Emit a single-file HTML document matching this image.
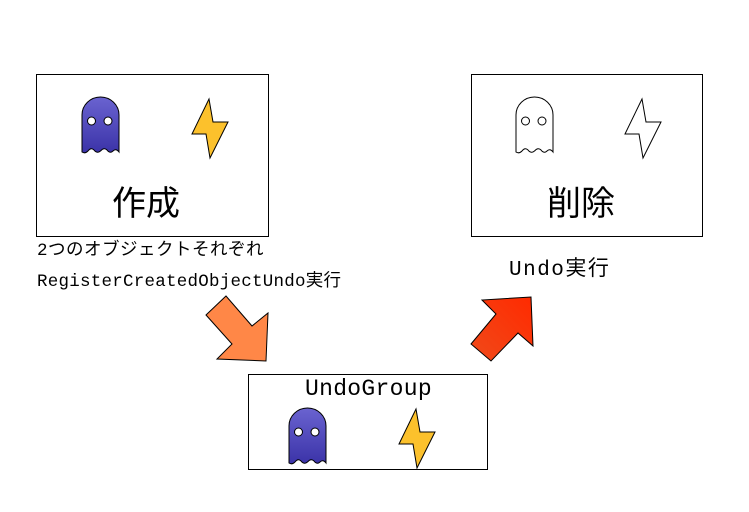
<!DOCTYPE html>
<html><head><meta charset="utf-8"><style>
body{margin:0;width:749px;height:512px;background:#fff;position:relative;overflow:hidden;font-family:"Liberation Mono","Noto Sans CJK JP",monospace}
.t{position:absolute;white-space:nowrap;color:#000}
</style></head><body>
<svg width="749" height="512" style="position:absolute;left:0;top:0">
<defs>
<linearGradient id="gg" x1="0" y1="0" x2="0" y2="1"><stop offset="0" stop-color="#6a63d0"/><stop offset="1" stop-color="#3b33a8"/></linearGradient>
<linearGradient id="ar" x1="0" y1="1" x2="1" y2="0"><stop offset="0" stop-color="#f04a1a"/><stop offset="1" stop-color="#ff2a00"/></linearGradient>
<g id="ghost">
<path d="M0,55 L0,18 A18.5,18 0 0 1 37,18 L37,55 Q34,51 31,54 Q28,57 25,53 Q22,50 18.5,54 Q15,57 12,53 Q9,50 6,54 Q3,57 0,55Z" stroke="#000" stroke-width="1"/>
<circle cx="9.5" cy="24" r="4" fill="#fff" stroke="#000" stroke-width="1"/>
<circle cx="26" cy="24" r="4" fill="#fff" stroke="#000" stroke-width="1"/>
</g>
<path id="bolt" d="M17,0 L0,35 L14,35 L18,59 L36,23 L21,23 Z" stroke="#000" stroke-width="1"/>
</defs>
<rect x="36.5" y="74.5" width="232" height="162" fill="none" stroke="#000"/>
<rect x="471.5" y="74.5" width="231" height="162" fill="none" stroke="#000"/>
<rect x="248.5" y="374.5" width="239" height="95" fill="none" stroke="#000"/>
<use href="#ghost" x="82" y="97" fill="url(#gg)"/>
<use href="#bolt" x="192" y="99" fill="#fcc12c"/>
<use href="#ghost" x="516" y="97" fill="#fff"/>
<use href="#bolt" x="625" y="99" fill="#fff"/>
<use href="#ghost" x="289" y="408" fill="url(#gg)"/>
<use href="#bolt" x="399" y="409" fill="#fcc12c"/>
<path d="M206,315 L226,296 L252,326 L268,313 L266,361 L217,359 L232,344 Z" fill="#ff8747" stroke="#000" stroke-width="1"/>
<path d="M471,344 L496,314 L482,300 L531,297 L533,346 L518,333 L491,361 Z" fill="url(#ar)" stroke="#000" stroke-width="1"/>
</svg>
<div class="t" style="left:112px;top:176px;font-size:34px;font-family:'Liberation Sans','Noto Sans CJK JP',sans-serif">作成</div>
<div class="t" style="left:547px;top:176px;font-size:34px;font-family:'Liberation Sans','Noto Sans CJK JP',sans-serif">削除</div>
<div class="t" style="left:37px;top:236px;font-size:17.5px;letter-spacing:0.5px">2つのオブジェクトそれぞれ</div>
<div class="t" style="left:37px;top:267px;font-size:17.5px;letter-spacing:0.25px">RegisterCreatedObjectUndo実行</div>
<div class="t" style="left:509px;top:252px;font-size:21px;letter-spacing:1.5px">Undo実行</div>
<div class="t" style="left:305px;top:376px;font-size:23px;letter-spacing:0.3px">UndoGroup</div>
</body></html>
